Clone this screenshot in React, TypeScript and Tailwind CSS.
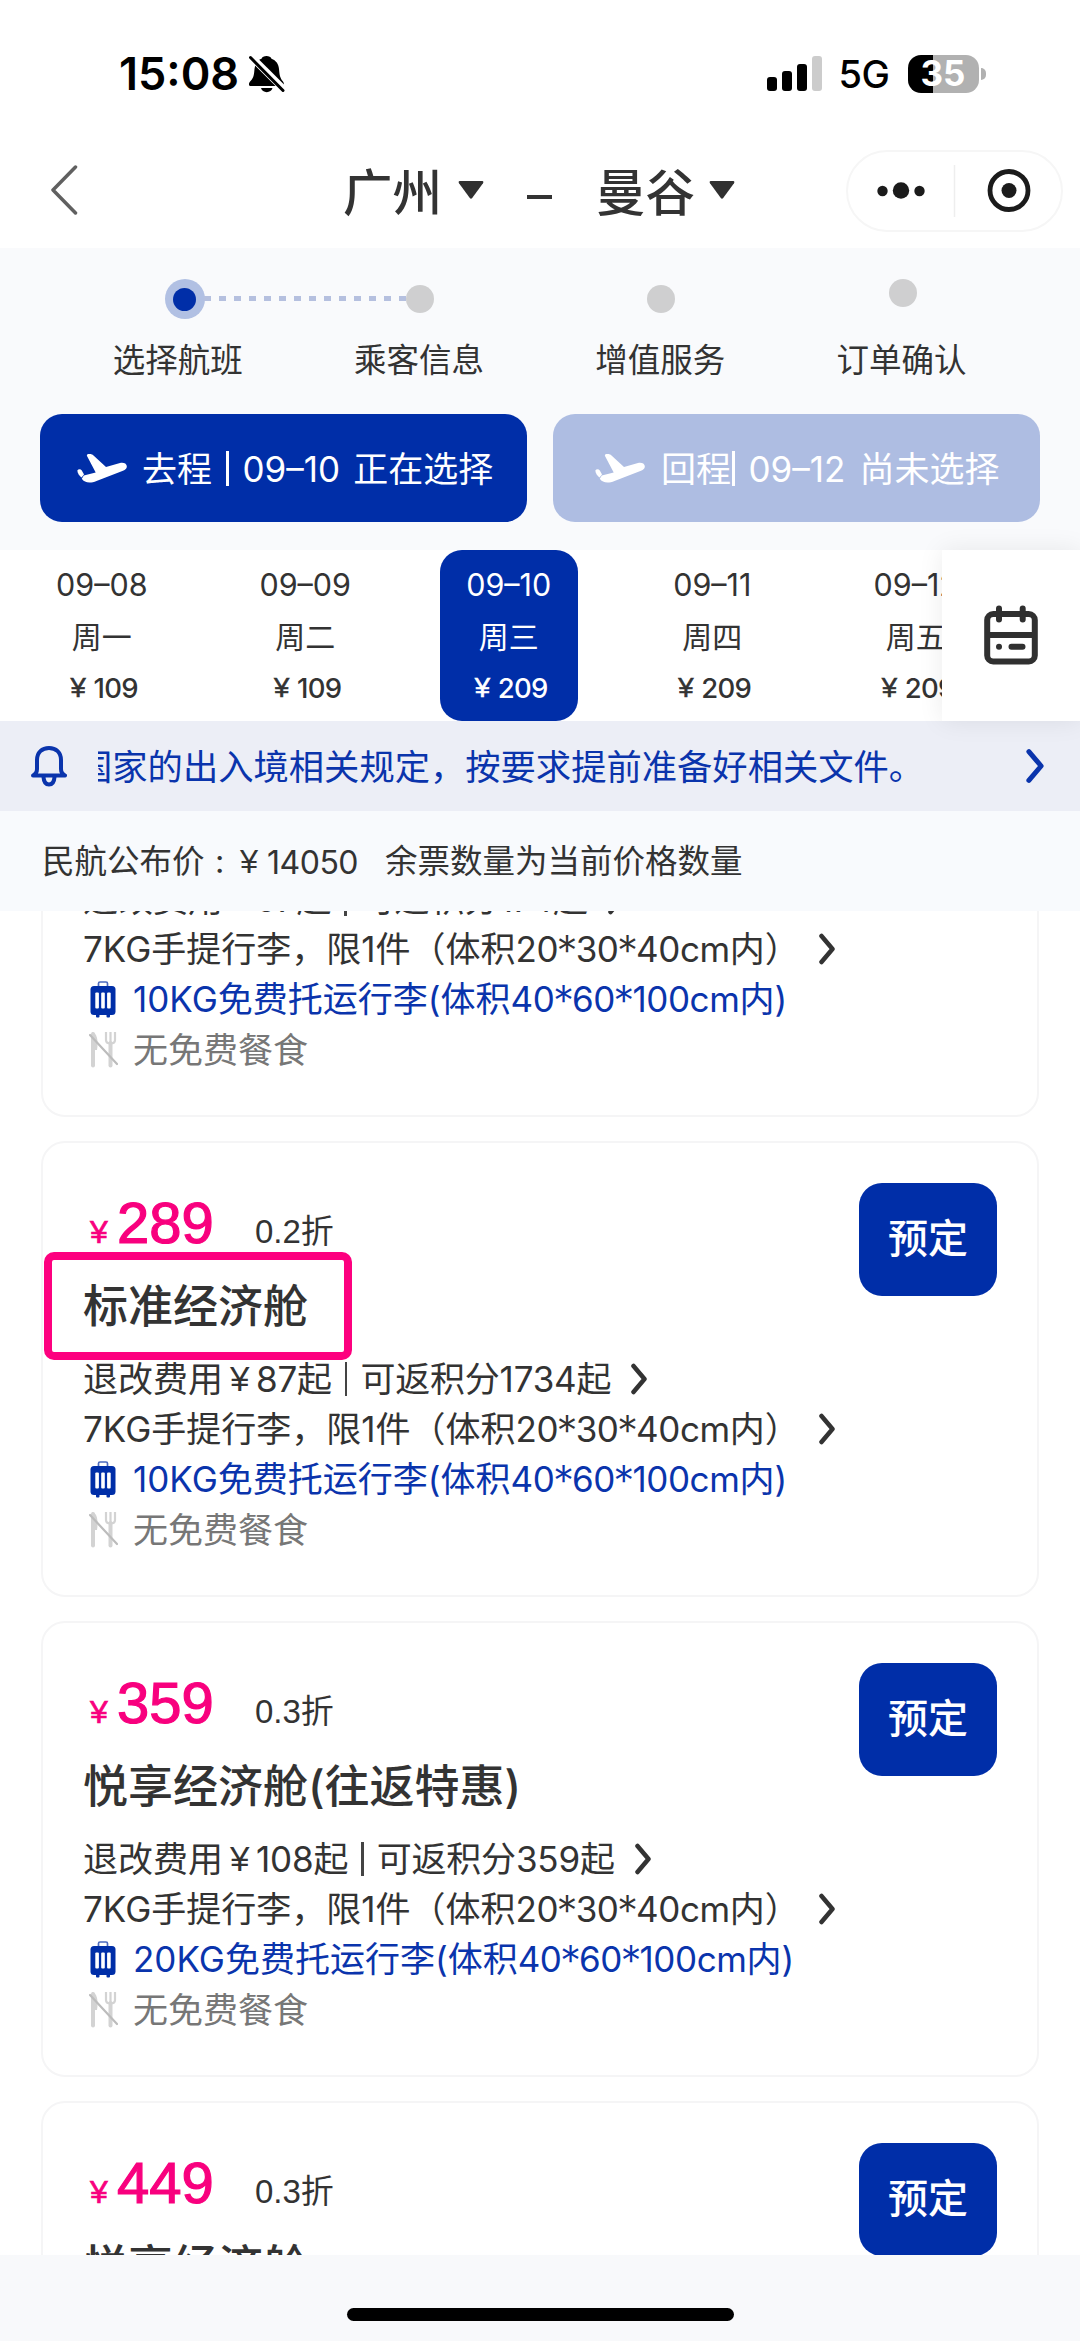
import React from "react";

const Chevron = ({ className }: { className: string }) => (
  <svg viewBox="0 0 18 32" className={className} fill="none" stroke="currentColor" strokeWidth="4.500" strokeLinecap="round" strokeLinejoin="round">
    <path d="M3.500 3 L14.500 16 L3.500 29" />
  </svg>
);

const Plane = () => (
  <svg viewBox="0 0 50 29" className="h-[29px] w-[50px] shrink-0" fill="white">
    <path d="M10 2 C9.500 0.500 10.500 0 12.500 0 C14.500 0 15.500 0.500 16.500 1.500 L29 13 L43 9 C46.500 8.200 49.500 9.500 49.800 12 C50 14.300 48.500 15.700 46 16.700 L19.500 27 C13.500 29.500 7.500 29 4.800 24.800 L6.800 21.500 L18.700 18.500 Z" />
    <path d="M0.300 16.500 C1.500 14.800 3.600 14.800 4.800 16.500 L7 20.500 L4.500 23.500 C2.200 21.800 0.600 19.500 0.300 16.500Z" />
  </svg>
);

const Suitcase = () => (
  <svg viewBox="0 0 26 37" className="h-[37px] w-[26px] shrink-0">
    <path d="M8.500 7 V2.500 Q8.500 1 10 1 H16 Q17.500 1 17.500 2.500 V7" fill="none" stroke="#4a69bd" strokeWidth="1.700" />
    <rect x="0.500" y="5" width="25" height="29" rx="3.500" fill="#002ea8" />
    <rect x="6" y="32" width="3.500" height="4.500" rx="1" fill="#002ea8" />
    <rect x="16.500" y="32" width="3.500" height="4.500" rx="1" fill="#002ea8" />
    <rect x="5.300" y="11.500" width="3.600" height="16" rx="1" fill="white" />
    <rect x="11.200" y="11.500" width="3.600" height="16" rx="1" fill="white" />
    <rect x="17.100" y="11.500" width="3.600" height="16" rx="1" fill="white" />
  </svg>
);

const NoMeal = () => (
  <svg viewBox="0 0 29 37" className="h-[37px] w-[29px] shrink-0" fill="none" stroke="#d3d3d3">
    <path d="M4 3 V34.500" strokeWidth="4" strokeLinecap="round" />
    <path d="M3 1 C8 2 9.500 9 8 19 L3 19Z" fill="#d3d3d3" stroke="none" />
    <path d="M17 1 V9 Q17 12.500 21.500 12.500 Q26 12.500 26 9 V1 M21.500 1 V12" strokeWidth="2.200" />
    <path d="M21.500 12 V34.500" strokeWidth="4" strokeLinecap="round" />
    <path d="M1 4 L28 33" stroke="#bcbcbc" strokeWidth="2.200" strokeLinecap="round" />
  </svg>
);

const Bell = () => (
  <svg viewBox="0 0 36 41" className="h-[41px] w-[36px] shrink-0" fill="none" stroke="#0a34ac" strokeWidth="4" strokeLinecap="round" strokeLinejoin="round">
    <path d="M2 29.500 C5 28 6 26 6 23 V14 C6 6.500 11 2 18 2 C25 2 30 6.500 30 14 V23 C30 26 31 28 34 29.500 Z" />
    <path d="M12.500 31 Q13 38.500 18 38.500 Q23 38.500 23.500 31" />
  </svg>
);

const MutedBell = () => (
  <svg viewBox="0 0 36 38" className="h-[38px] w-[36px]">
    <path d="M2 31 C-1 31 -0.500 28 1.500 26 C5 22.500 5 19 5.500 14 C6 8.500 9 5 12.500 3.800 C13.500 0 21.500 0 22.500 3.800 C27 5.500 29.500 9 30 14 C30.500 20 31 23 34 26.500 C35.500 28.500 35 31 33 31Z" fill="black" />
    <path d="M12 33 H23.500 C22.500 38.500 13 38.500 12 33Z" fill="black" />
    <path d="M0 -0.500 L37 36.500" stroke="white" strokeWidth="7" />
    <path d="M1.500 2.500 L34 35.500" stroke="black" strokeWidth="3" strokeLinecap="round" />
  </svg>
);

const Calendar = () => (
  <svg viewBox="0 0 54 60" className="h-[60px] w-[54px]" fill="none" stroke="#303030" strokeWidth="6" strokeLinecap="round">
    <rect x="3.200" y="9" width="47.600" height="47.500" rx="6" />
    <path d="M15 3.500 V14.500 M38.700 3.500 V14.500" />
    <path d="M4 30 H50" strokeLinecap="butt" />
    <path d="M15 41.800 H15.010 M27.500 41.800 H38.500" />
  </svg>
);

const Triangle = ({ className }: { className: string }) => (
  <svg viewBox="0 0 26 18" className={className} fill="#303030">
    <path d="M1.500 0 H24.500 Q26 0.500 25 2.200 L14.200 17 Q13 18.500 11.800 17 L1 2.200 Q0 0.500 1.500 0Z" />
  </svg>
);

// Dimensions such as 20*30*40 with large asterisks centred on the digits
const Size = ({ parts }: { parts: string[] }) => (
  <span className="tracking-[-0.4px]">
    {parts.map((p, i) => (
      <React.Fragment key={i}>
        {i > 0 && <span className="inline-flex h-[20px] w-[17.500px] items-center justify-center align-[-4px] text-[42px] leading-none font-light">*</span>}
        {p}
      </React.Fragment>
    ))}
  </span>
);

const steps = ["选择航班", "乘客信息", "增值服务", "订单确认"];

const days = [
  { date: "09–08", week: "周一", price: "109" },
  { date: "09–09", week: "周二", price: "109" },
  { date: "09–10", week: "周三", price: "209", active: true },
  { date: "09–11", week: "周四", price: "209" },
  { date: "09–12", week: "周五", price: "209" },
];

const fares = [
  { price: "219", off: "0.2折", name: "特惠经济舱", fee: "97", points: "174", bag: "10KG" },
  { price: "289", off: "0.2折", name: "标准经济舱", fee: "87", points: "1734", bag: "10KG", marked: true },
  { price: "359", off: "0.3折", name: "悦享经济舱(往返特惠)", fee: "108", points: "359", bag: "20KG" },
  { price: "449", off: "0.3折", name: "悦享经济舱", fee: "90", points: "2694", bag: "20KG" },
];

type Fare = (typeof fares)[number];

function FareCard({ fare }: { fare: Fare }) {
  return (
    <article className="relative flex h-[456px] shrink-0 justify-between rounded-[24px] border-2 border-[#f5f5f6] bg-white pr-[40px] pl-[40px]">
      <div className="flex flex-col">
        <div className="mt-[50px] flex h-[60px] items-baseline font-['Liberation_Sans','Noto_Sans_CJK_SC',sans-serif] text-[#f8007e]">
          <span className="w-[34px] pl-[7px] text-[32px] [-webkit-text-stroke:0.7px]">¥</span>
          <span className="w-[138px] text-[58px] leading-[60px] [-webkit-text-stroke:1.200px]">{fare.price}</span>
          <span className="text-[33px] text-[#333]">{fare.off}</span>
        </div>
        <h2 className="mt-[22px] h-[64px] text-[45px] leading-[64px] font-medium">{fare.name}</h2>
        <div className="mt-[15px] flex flex-col text-[35px] leading-[50px]">
          <div className="flex h-[50px] items-center whitespace-pre">
            <span>退改费用</span>
            <span className="w-[33px] pl-[7px] font-['Liberation_Sans']">¥</span>
            <span className="tracking-[-0.2px]">{fare.fee}起</span>
            <i className="mx-[13px] h-[34px] w-[2.500px] bg-[#444]" />
            <span className="tracking-[-0.2px]">可返积分{fare.points}起</span>
            <Chevron className="ml-[19px] h-[32px] w-[18px]" />
          </div>
          <div className="flex h-[50px] items-center whitespace-pre">
            <span>7KG手提行李，限1件（体积<Size parts={["20", "30", "40cm"]} />内）</span>
            <Chevron className="ml-[18px] h-[32px] w-[18px]" />
          </div>
          <div className="flex h-[50px] items-center gap-[17px] pl-[7px] text-[#0a34ac]">
            <Suitcase />
            <span>{fare.bag}免费托运行李(体积<Size parts={["40", "60", "100cm"]} />内)</span>
          </div>
          <div className="flex h-[50px] items-center gap-[15px] pt-px pl-[6px] text-[#777]">
            <NoMeal />
            <span>无免费餐食</span>
          </div>
        </div>
      </div>
      <button className="mt-[40px] h-[113px] w-[138px] shrink-0 rounded-[23px] bg-[#002ea8] pb-px text-[40px] font-medium text-white">预定</button>
      {fare.marked && <div className="absolute top-[109px] left-[1px] h-[108px] w-[308px] rounded-[10px] border-8 border-[#fd007f]" />}
    </article>
  );
}

export default function App() {
  return (
    <main className="flex h-[2341px] w-[1080px] flex-col overflow-hidden bg-white font-['Inter','Noto_Sans_CJK_SC',sans-serif] text-[#333]">
      <header className="h-[248px] shrink-0">
        <div className="flex h-[147px] items-center pl-[119px] text-black">
          <span className="w-[130px] text-[45px] font-semibold">15:08</span>
          <MutedBell />
          <div className="ml-[482px] flex h-[35px] items-end gap-[5.500px]">
            <i className="h-[14px] w-[9.500px] rounded-[3px] bg-black" />
            <i className="h-[20px] w-[9.500px] rounded-[3px] bg-black" />
            <i className="h-[27px] w-[9.500px] rounded-[3px] bg-black" />
            <i className="h-[35px] w-[9.500px] rounded-[3px] bg-[#ccc]" />
          </div>
          <span className="ml-[17px] w-[69px] pt-[2px] text-[38px] font-medium tracking-[-0.5px]">5G</span>
          <div className="flex h-[38px] w-[71px] items-center justify-center rounded-[13px] bg-[linear-gradient(90deg,#000_25px,#b1b1b1_25px)] text-[35px] font-bold text-white">35</div>
          <i className="ml-[2px] h-[12px] w-[5px] rounded-r-full bg-[#b1b1b1]" />
        </div>
        <div className="flex h-[88px] items-center">
          <svg viewBox="0 0 27 50" className="mb-[3px] ml-[51px] h-[50px] w-[27px]" fill="none" stroke="#606060" strokeWidth="3.500" strokeLinecap="round" strokeLinejoin="round">
            <path d="M24.500 2 L2 25 L24.500 48" />
          </svg>
          <div className="ml-[265px] flex items-center text-[49.500px] font-medium">
            <span className="w-[115px] pt-[4px]">广州</span>
            <Triangle className="mb-[2px] h-[18px] w-[26px]" />
            <i className="mt-[12px] ml-[43px] h-[4px] w-[25px] bg-[#333]" />
            <span className="ml-[44px] w-[113px] pt-[4px]">曼谷</span>
            <Triangle className="mb-[2px] h-[18px] w-[26px]" />
          </div>
          <div className="ml-[111px] flex h-[82px] w-[217px] items-center rounded-full border-2 border-[#f6f6f6]">
            <svg viewBox="0 0 212 78" className="h-[78px] w-[212px]">
              <circle cx="34.500" cy="39" r="5.200" fill="#1b1b1b" />
              <circle cx="53" cy="38.500" r="8.200" fill="#1b1b1b" />
              <circle cx="71.500" cy="39" r="5.200" fill="#1b1b1b" />
              <path d="M106.500 13 V65" stroke="#eee" strokeWidth="1.500" />
              <circle cx="161" cy="38.500" r="19" fill="none" stroke="#1b1b1b" strokeWidth="4.800" />
              <circle cx="161" cy="38.500" r="7.500" fill="#1b1b1b" />
            </svg>
          </div>
        </div>
      </header>

      <section className="h-[302px] shrink-0 bg-[#f9fafc] pt-[31px]">
        <div className="flex pl-[57px]">
          {steps.map((label, i) => (
            <div key={label} className="relative flex w-[241.300px] flex-col items-center">
              <div className="flex h-[40px] items-center pl-[2px]">
                {i === 0 ? (
                  <i className="ml-[12px] flex size-[40px] items-center justify-center rounded-full bg-[#b1c0e3]">
                    <i className="size-[23px] rounded-full bg-[#002ea8]" />
                  </i>
                ) : (
                  <i className={i === 3 ? "mb-[13px] size-[28px] rounded-full bg-[#cfcfd0]" : "size-[28px] rounded-full bg-[#cfcfd0]"} />
                )}
              </div>
              {i === 0 && (
                <i className="absolute top-[17px] left-[147px] h-[5px] w-[203px] bg-[repeating-linear-gradient(90deg,#b5c0df_0px,#b5c0df_7.500px,transparent_7.500px,transparent_15px)]" />
              )}
              <span className="mt-[18px] text-[32.500px] leading-[48px]">{label}</span>
            </div>
          ))}
        </div>
        <div className="mt-[29px] flex gap-[26px] px-[40px] text-[35px] whitespace-pre text-white">
          <div className="flex h-[108px] w-[487px] items-center rounded-[22px] bg-[#002ea8] pl-[37px]">
            <Plane />
            <span className="ml-[15px] pt-[2px]">去程</span>
            <i className="mr-[14px] ml-[14px] h-[35px] w-[2.500px] bg-white" />
            <span className="pt-[2px]">09–10</span>
            <span className="ml-[13px] pt-[2px]">正在选择</span>
          </div>
          <div className="flex h-[108px] w-[487px] items-center rounded-[22px] bg-[#aebde2] pl-[42px]">
            <Plane />
            <span className="ml-[16px] pt-[2px]">回程</span>
            <i className="mr-[14px] ml-[1px] h-[35px] w-[2.500px] bg-white" />
            <span className="pt-[2px]">09–12</span>
            <span className="ml-[14px] pt-[2px]">尚未选择</span>
          </div>
        </div>
      </section>

      <section className="relative h-[171px] shrink-0">
        <div className="flex overflow-hidden">
          {days.map((d) => (
            <div key={d.date} className="flex w-[203.500px] shrink-0 justify-center">
              <div className={d.active ? "flex h-[171px] w-[138px] flex-col items-center rounded-[22px] bg-[#002ea8] pt-[13px] text-white" : "flex h-[171px] w-[138px] flex-col items-center pt-[13px]"}>
                <span className="pt-px text-[30.500px] leading-[42px]">{d.date}</span>
                <span className="mt-[8px] text-[30px] leading-[46px]">{d.week}</span>
                <span className="mt-[8px] ml-[5px] flex text-[27.500px] leading-[40px] font-medium tracking-[-0.7px]">
                  <span className="w-[23px] font-['Liberation_Sans'] [-webkit-text-stroke:0.600px]">¥</span>
                  {d.price}
                </span>
              </div>
            </div>
          ))}
        </div>
        <div className="absolute top-0 right-0 flex h-[171px] w-[138px] items-center justify-center bg-white pr-[1px] pb-[1px] shadow-[0_0_24px_rgba(0,0,0,0.08)]">
          <Calendar />
        </div>
      </section>

      <section className="flex h-[90px] shrink-0 items-center bg-[#eceef6] pl-[31px] text-[#0a34ac]">
        <Bell />
        <div className="ml-[31px] w-[927px] overflow-hidden pt-[4px]">
          <p className="-ml-[21px] text-[35.300px] whitespace-nowrap">国家的出入境相关规定，按要求提前准备好相关文件。</p>
        </div>
        <Chevron className="h-[36px] w-[20px]" />
      </section>

      <section className="flex h-[100px] shrink-0 items-center bg-[#f8fafd] pt-[3px] pl-[42px] text-[32.500px] whitespace-pre">
        <span className="w-[173px]">民航公布价</span>
        <span className="w-[25px]">:</span>
        <span className="w-[27px] font-['Liberation_Sans']">¥</span>
        <span className="w-[118px] text-[32px] tracking-[-0.5px]">14050</span>
        <span>余票数量为当前价格数量</span>
      </section>

      <section className="h-[1344px] shrink-0 overflow-hidden px-[41px]">
        <div className="-mt-[250px] flex flex-col gap-6">
          {fares.map((f) => (
            <FareCard key={f.price} fare={f} />
          ))}
        </div>
      </section>

      <footer className="flex flex-1 justify-center bg-[#f8f9fb] pt-[53px]">
        <i className="h-[13px] w-[387px] rounded-full bg-black" />
      </footer>
    </main>
  );
}
